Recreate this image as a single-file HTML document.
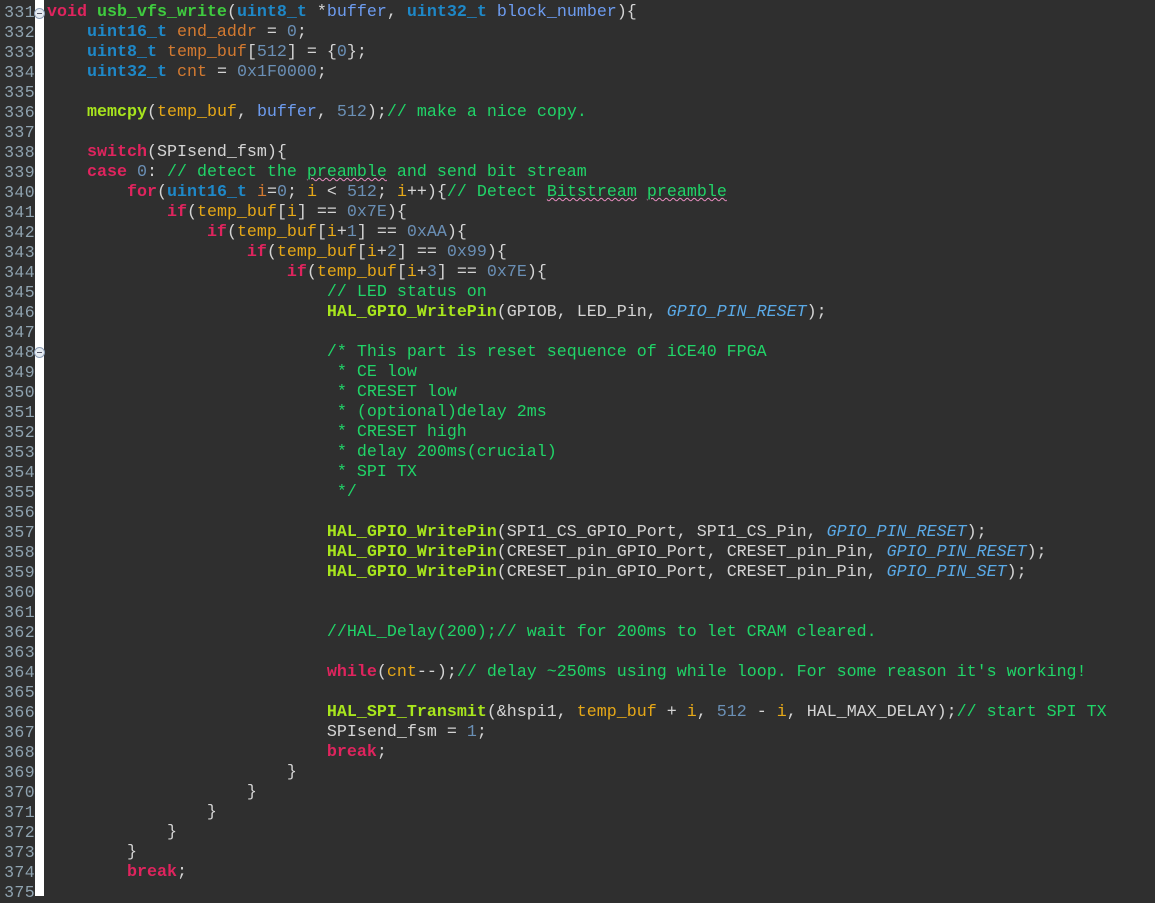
<!DOCTYPE html>
<html><head><meta charset="utf-8"><style>
html,body{margin:0;padding:0;background:#2f2f2f;width:1155px;height:896px;overflow:hidden}
#g{position:absolute;left:0;top:0;width:35px;height:896px;background:#2f2f2f}
#w{position:absolute;left:35px;top:0;width:9px;height:896px;background:#fff}
.n{position:absolute;left:0;width:35px;text-align:right;color:#8fa3b0;font:16.5px/20px "Liberation Mono",monospace;letter-spacing:0.4px}
.l{position:absolute;left:47px;white-space:pre;color:#d4d4d4;font:16.67px/20px "Liberation Mono",monospace}
.fold{position:absolute;left:34px;width:9px;height:9px;border:1px solid #8fa0b8;border-radius:50%;background:#e6ecf2}
.fold:after{content:"";position:absolute;left:2px;top:4px;width:5px;height:1px;background:#556}
.k{color:#e0245e;font-weight:bold}
.f{color:#3fcc3f;font-weight:bold}
.t{color:#1e88c8;font-weight:bold}
.p{color:#6d9cf0}
.v{color:#d47a30}
.u{color:#e6a817}
.d{color:#6a8fb5}
.c{color:#20d468}
.h{color:#a8e61d;font-weight:bold}
.e{color:#5aa9e6;font-style:italic}
.sq{text-decoration:underline wavy #e88fc0;text-decoration-thickness:1px}
</style></head><body>
<div id="g"></div><div id="w"></div>
<div class="fold" style="top:8px"></div>
<div class="fold" style="top:347px"></div>
<div class="n" style="top:3px">331</div><div class="l" style="top:3px"><span class="k">void</span> <span class="f">usb_vfs_write</span>(<span class="t">uint8_t</span> *<span class="p">buffer</span>, <span class="t">uint32_t</span> <span class="p">block_number</span>){</div>
<div class="n" style="top:23px">332</div><div class="l" style="top:23px">    <span class="t">uint16_t</span> <span class="v">end_addr</span> = <span class="d">0</span>;</div>
<div class="n" style="top:43px">333</div><div class="l" style="top:43px">    <span class="t">uint8_t</span> <span class="v">temp_buf</span>[<span class="d">512</span>] = {<span class="d">0</span>};</div>
<div class="n" style="top:63px">334</div><div class="l" style="top:63px">    <span class="t">uint32_t</span> <span class="v">cnt</span> = <span class="d">0x1F0000</span>;</div>
<div class="n" style="top:83px">335</div>
<div class="n" style="top:103px">336</div><div class="l" style="top:103px">    <span class="h">memcpy</span>(<span class="u">temp_buf</span>, <span class="p">buffer</span>, <span class="d">512</span>);<span class="c">// make a nice copy.</span></div>
<div class="n" style="top:123px">337</div>
<div class="n" style="top:143px">338</div><div class="l" style="top:143px">    <span class="k">switch</span>(SPIsend_fsm){</div>
<div class="n" style="top:163px">339</div><div class="l" style="top:163px">    <span class="k">case</span> <span class="d">0</span>: <span class="c">// detect the <span class="sq">preamble</span> and send bit stream</span></div>
<div class="n" style="top:183px">340</div><div class="l" style="top:183px">        <span class="k">for</span>(<span class="t">uint16_t</span> <span class="v">i</span>=<span class="d">0</span>; <span class="u">i</span> &lt; <span class="d">512</span>; <span class="u">i</span>++){<span class="c">// Detect <span class="sq">Bitstream</span> <span class="sq">preamble</span></span></div>
<div class="n" style="top:203px">341</div><div class="l" style="top:203px">            <span class="k">if</span>(<span class="u">temp_buf</span>[<span class="u">i</span>] == <span class="d">0x7E</span>){</div>
<div class="n" style="top:223px">342</div><div class="l" style="top:223px">                <span class="k">if</span>(<span class="u">temp_buf</span>[<span class="u">i</span>+<span class="d">1</span>] == <span class="d">0xAA</span>){</div>
<div class="n" style="top:243px">343</div><div class="l" style="top:243px">                    <span class="k">if</span>(<span class="u">temp_buf</span>[<span class="u">i</span>+<span class="d">2</span>] == <span class="d">0x99</span>){</div>
<div class="n" style="top:263px">344</div><div class="l" style="top:263px">                        <span class="k">if</span>(<span class="u">temp_buf</span>[<span class="u">i</span>+<span class="d">3</span>] == <span class="d">0x7E</span>){</div>
<div class="n" style="top:283px">345</div><div class="l" style="top:283px">                            <span class="c">// LED status on</span></div>
<div class="n" style="top:303px">346</div><div class="l" style="top:303px">                            <span class="h">HAL_GPIO_WritePin</span>(GPIOB, LED_Pin, <span class="e">GPIO_PIN_RESET</span>);</div>
<div class="n" style="top:323px">347</div>
<div class="n" style="top:343px">348</div><div class="l" style="top:343px"><span class="c">                            /* This part is reset sequence of iCE40 FPGA</span></div>
<div class="n" style="top:363px">349</div><div class="l" style="top:363px"><span class="c">                             * CE low</span></div>
<div class="n" style="top:383px">350</div><div class="l" style="top:383px"><span class="c">                             * CRESET low</span></div>
<div class="n" style="top:403px">351</div><div class="l" style="top:403px"><span class="c">                             * (optional)delay 2ms</span></div>
<div class="n" style="top:423px">352</div><div class="l" style="top:423px"><span class="c">                             * CRESET high</span></div>
<div class="n" style="top:443px">353</div><div class="l" style="top:443px"><span class="c">                             * delay 200ms(crucial)</span></div>
<div class="n" style="top:463px">354</div><div class="l" style="top:463px"><span class="c">                             * SPI TX</span></div>
<div class="n" style="top:483px">355</div><div class="l" style="top:483px"><span class="c">                             */</span></div>
<div class="n" style="top:503px">356</div>
<div class="n" style="top:523px">357</div><div class="l" style="top:523px">                            <span class="h">HAL_GPIO_WritePin</span>(SPI1_CS_GPIO_Port, SPI1_CS_Pin, <span class="e">GPIO_PIN_RESET</span>);</div>
<div class="n" style="top:543px">358</div><div class="l" style="top:543px">                            <span class="h">HAL_GPIO_WritePin</span>(CRESET_pin_GPIO_Port, CRESET_pin_Pin, <span class="e">GPIO_PIN_RESET</span>);</div>
<div class="n" style="top:563px">359</div><div class="l" style="top:563px">                            <span class="h">HAL_GPIO_WritePin</span>(CRESET_pin_GPIO_Port, CRESET_pin_Pin, <span class="e">GPIO_PIN_SET</span>);</div>
<div class="n" style="top:583px">360</div>
<div class="n" style="top:603px">361</div>
<div class="n" style="top:623px">362</div><div class="l" style="top:623px"><span class="c">                            //HAL_Delay(200);// wait for 200ms to let CRAM cleared.</span></div>
<div class="n" style="top:643px">363</div>
<div class="n" style="top:663px">364</div><div class="l" style="top:663px">                            <span class="k">while</span>(<span class="u">cnt</span>--);<span class="c">// delay ~250ms using while loop. For some reason it's working!</span></div>
<div class="n" style="top:683px">365</div>
<div class="n" style="top:703px">366</div><div class="l" style="top:703px">                            <span class="h">HAL_SPI_Transmit</span>(&amp;hspi1, <span class="u">temp_buf</span> + <span class="u">i</span>, <span class="d">512</span> - <span class="u">i</span>, HAL_MAX_DELAY);<span class="c">// start SPI TX</span></div>
<div class="n" style="top:723px">367</div><div class="l" style="top:723px">                            SPIsend_fsm = <span class="d">1</span>;</div>
<div class="n" style="top:743px">368</div><div class="l" style="top:743px">                            <span class="k">break</span>;</div>
<div class="n" style="top:763px">369</div><div class="l" style="top:763px">                        }</div>
<div class="n" style="top:783px">370</div><div class="l" style="top:783px">                    }</div>
<div class="n" style="top:803px">371</div><div class="l" style="top:803px">                }</div>
<div class="n" style="top:823px">372</div><div class="l" style="top:823px">            }</div>
<div class="n" style="top:843px">373</div><div class="l" style="top:843px">        }</div>
<div class="n" style="top:863px">374</div><div class="l" style="top:863px">        <span class="k">break</span>;</div>
<div class="n" style="top:883px">375</div>
</body></html>
